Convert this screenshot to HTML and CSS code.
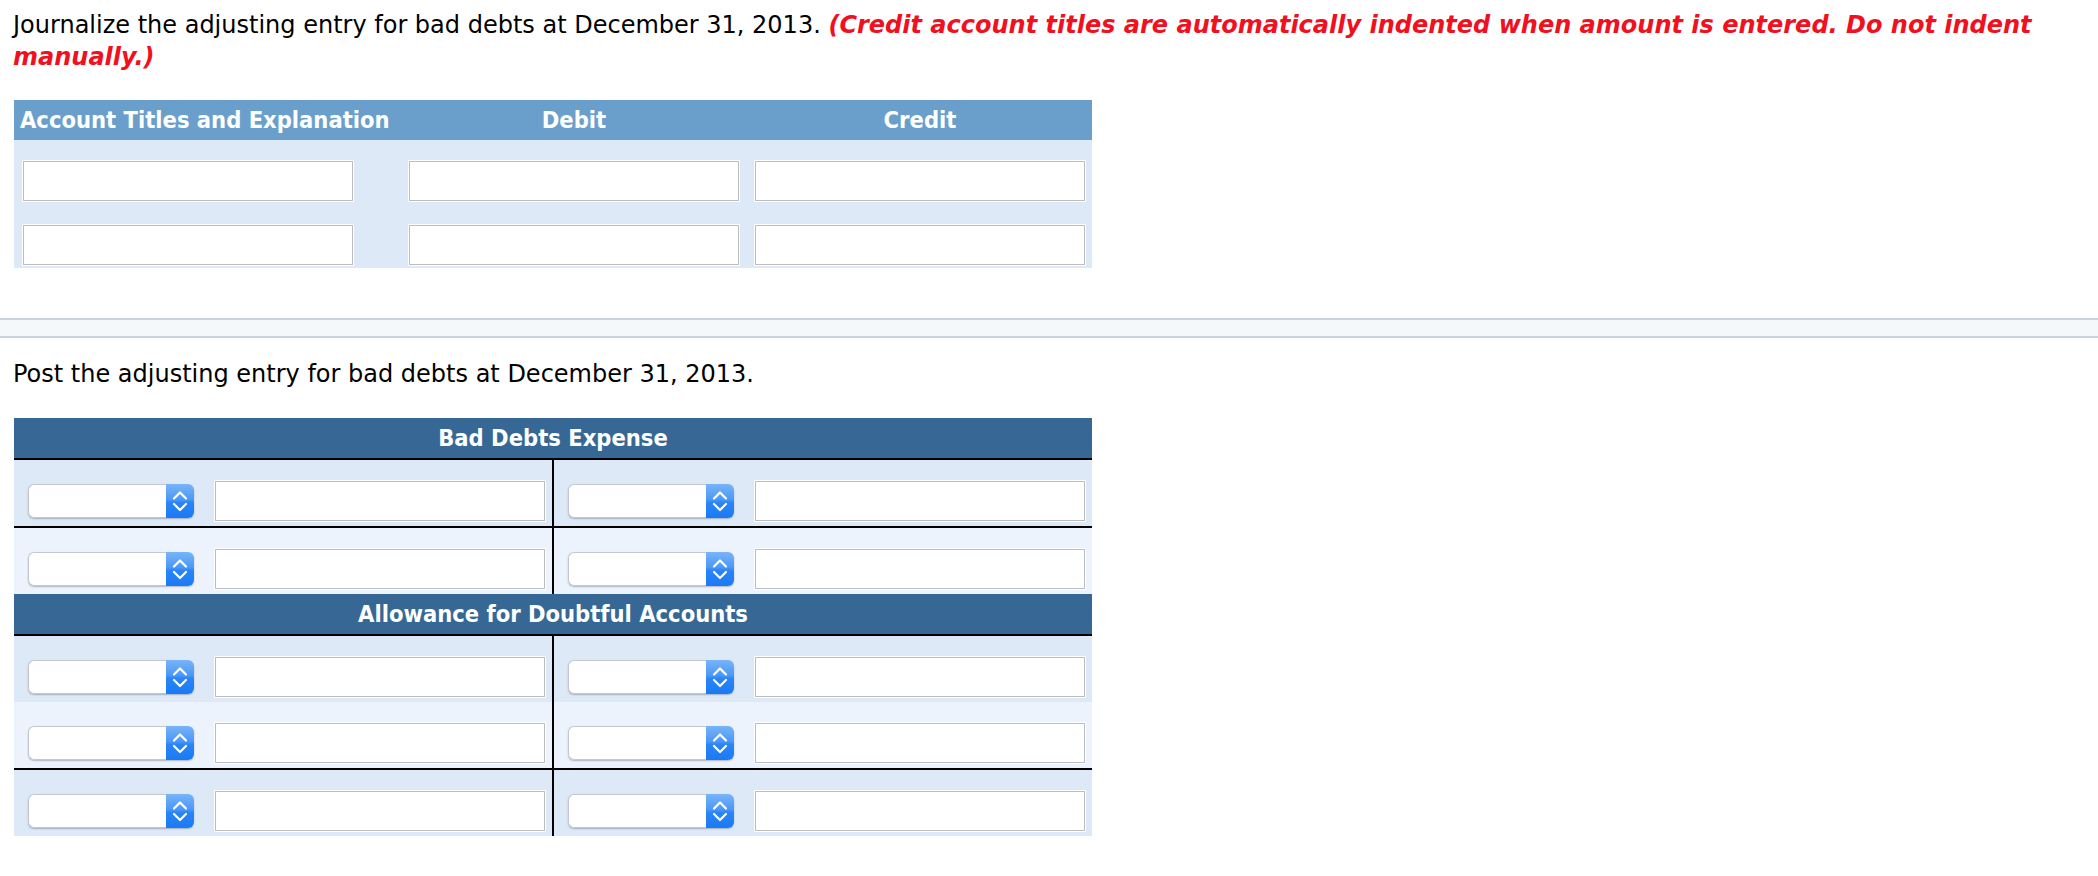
FILE: index.html
```html
<!DOCTYPE html>
<html lang="en">
<head>
<meta charset="utf-8">
<title>Bad debts adjusting entry</title>
<link rel="stylesheet" href="styles.css">
</head>
<body>
<div class="section">
  <p class="prompt first">Journalize the adjusting entry for bad debts at December 31, 2013. <span class="note">(Credit account titles are automatically indented when amount is entered. Do not indent manually.)</span></p>

  <div class="journal">
    <div class="jhead">
      <div class="jh jh-acct">Account Titles and Explanation</div>
      <div class="jh jh-num">Debit</div>
      <div class="jh jh-num">Credit</div>
    </div>
    <div class="jrow">
      <div class="jcell"><input class="field" type="text"></div>
      <div class="jcell"><input class="field" type="text"></div>
      <div class="jcell"><input class="field" type="text"></div>
    </div>
    <div class="jrow">
      <div class="jcell"><input class="field" type="text"></div>
      <div class="jcell"><input class="field" type="text"></div>
      <div class="jcell"><input class="field" type="text"></div>
    </div>
  </div>
</div>

<div class="divider"></div>

<div class="section">
  <p class="prompt second">Post the adjusting entry for bad debts at December 31, 2013.</p>

  <div class="ledger">
    <div class="lhead">Bad Debts Expense</div>
    <div class="lrow dark ruled">
      <div class="lcell left">
        <div class="select"><span class="select-field"></span><span class="select-btn"><svg viewBox="0 0 28 34" width="28" height="34"><path d="M8 14.5 L14 8.5 L20 14.5 M8 20 L14 26 L20 20" fill="none" stroke="#fff" stroke-width="2.2" stroke-linecap="round" stroke-linejoin="round"/></svg></span></div>
        <input class="field" type="text">
      </div>
      <div class="lcell">
        <div class="select"><span class="select-field"></span><span class="select-btn"><svg viewBox="0 0 28 34" width="28" height="34"><path d="M8 14.5 L14 8.5 L20 14.5 M8 20 L14 26 L20 20" fill="none" stroke="#fff" stroke-width="2.2" stroke-linecap="round" stroke-linejoin="round"/></svg></span></div>
        <input class="field" type="text">
      </div>
    </div>
    <div class="lrow light">
      <div class="lcell left">
        <div class="select"><span class="select-field"></span><span class="select-btn"><svg viewBox="0 0 28 34" width="28" height="34"><path d="M8 14.5 L14 8.5 L20 14.5 M8 20 L14 26 L20 20" fill="none" stroke="#fff" stroke-width="2.2" stroke-linecap="round" stroke-linejoin="round"/></svg></span></div>
        <input class="field" type="text">
      </div>
      <div class="lcell">
        <div class="select"><span class="select-field"></span><span class="select-btn"><svg viewBox="0 0 28 34" width="28" height="34"><path d="M8 14.5 L14 8.5 L20 14.5 M8 20 L14 26 L20 20" fill="none" stroke="#fff" stroke-width="2.2" stroke-linecap="round" stroke-linejoin="round"/></svg></span></div>
        <input class="field" type="text">
      </div>
    </div>

    <div class="lhead">Allowance for Doubtful Accounts</div>
    <div class="lrow dark">
      <div class="lcell left">
        <div class="select"><span class="select-field"></span><span class="select-btn"><svg viewBox="0 0 28 34" width="28" height="34"><path d="M8 14.5 L14 8.5 L20 14.5 M8 20 L14 26 L20 20" fill="none" stroke="#fff" stroke-width="2.2" stroke-linecap="round" stroke-linejoin="round"/></svg></span></div>
        <input class="field" type="text">
      </div>
      <div class="lcell">
        <div class="select"><span class="select-field"></span><span class="select-btn"><svg viewBox="0 0 28 34" width="28" height="34"><path d="M8 14.5 L14 8.5 L20 14.5 M8 20 L14 26 L20 20" fill="none" stroke="#fff" stroke-width="2.2" stroke-linecap="round" stroke-linejoin="round"/></svg></span></div>
        <input class="field" type="text">
      </div>
    </div>
    <div class="lrow light ruled">
      <div class="lcell left">
        <div class="select"><span class="select-field"></span><span class="select-btn"><svg viewBox="0 0 28 34" width="28" height="34"><path d="M8 14.5 L14 8.5 L20 14.5 M8 20 L14 26 L20 20" fill="none" stroke="#fff" stroke-width="2.2" stroke-linecap="round" stroke-linejoin="round"/></svg></span></div>
        <input class="field" type="text">
      </div>
      <div class="lcell">
        <div class="select"><span class="select-field"></span><span class="select-btn"><svg viewBox="0 0 28 34" width="28" height="34"><path d="M8 14.5 L14 8.5 L20 14.5 M8 20 L14 26 L20 20" fill="none" stroke="#fff" stroke-width="2.2" stroke-linecap="round" stroke-linejoin="round"/></svg></span></div>
        <input class="field" type="text">
      </div>
    </div>
    <div class="lrow dark">
      <div class="lcell left">
        <div class="select"><span class="select-field"></span><span class="select-btn"><svg viewBox="0 0 28 34" width="28" height="34"><path d="M8 14.5 L14 8.5 L20 14.5 M8 20 L14 26 L20 20" fill="none" stroke="#fff" stroke-width="2.2" stroke-linecap="round" stroke-linejoin="round"/></svg></span></div>
        <input class="field" type="text">
      </div>
      <div class="lcell">
        <div class="select"><span class="select-field"></span><span class="select-btn"><svg viewBox="0 0 28 34" width="28" height="34"><path d="M8 14.5 L14 8.5 L20 14.5 M8 20 L14 26 L20 20" fill="none" stroke="#fff" stroke-width="2.2" stroke-linecap="round" stroke-linejoin="round"/></svg></span></div>
        <input class="field" type="text">
      </div>
    </div>
  </div>
</div>
</body>
</html>
```

FILE: styles.css
```css
html, body {
  margin: 0;
  padding: 0;
  background: #ffffff;
}

body {
  font-family: "DejaVu Sans", Verdana, sans-serif;
  font-size: 24px;
  color: #000000;
}

.section {
  padding: 0 13px;
}

.prompt {
  margin: 0;
  line-height: 30px;
}

.prompt.first {
  padding-top: 9px;
  line-height: 32px;
}

.prompt.second {
  margin-top: 21px;
}

.note {
  color: #f0101e;
  font-weight: bold;
  font-style: italic;
}

/* journal entry table */
.journal {
  width: 1078px;
  margin: 27px 0 0 1px;
  background: #dde9f6;
}

.jhead {
  display: grid;
  grid-template-columns: 386px 346px 346px;
  height: 40px;
  background: #6b9fcb;
  color: #ffffff;
  font-family: "DejaVu Sans Condensed", "DejaVu Sans", sans-serif;
  font-stretch: condensed;
  font-weight: bold;
  font-size: 23.5px;
}

.jh {
  display: flex;
  align-items: center;
  white-space: nowrap;
}

.jh-acct {
  padding-left: 6px;
}

.jh-num {
  justify-content: center;
  padding: 0 7px 0 9px;
}

.jrow {
  display: grid;
  grid-template-columns: 386px 346px 346px;
  height: 64px;
  box-sizing: border-box;
}

.jcell {
  padding: 21px 0 3px 9px;
}

.field {
  display: block;
  box-sizing: border-box;
  width: 330px;
  height: 40px;
  margin: 0;
  padding: 0 4px;
  border: 1px solid #bdbdbd;
  border-radius: 0;
  background: #ffffff;
  box-shadow: 0 0 0 1px #ffffff;
  font: inherit;
  outline: none;
}

/* divider band */
.divider {
  margin-top: 50px;
  height: 16px;
  border-top: 2px solid #cad2dd;
  border-bottom: 2px solid #cad2dd;
  background: #f5f8fb;
}

/* T-account ledger */
.ledger {
  width: 1078px;
  margin: 29px 0 0 1px;
}

.lhead {
  height: 40px;
  background: #376895;
  color: #ffffff;
  border-bottom: 2px solid #000000;
  display: flex;
  align-items: center;
  justify-content: center;
  font-family: "DejaVu Sans Condensed", "DejaVu Sans", sans-serif;
  font-stretch: condensed;
  font-weight: bold;
  font-size: 23.5px;
  white-space: nowrap;
}

.lrow {
  display: grid;
  grid-template-columns: 540px 538px;
  height: 66px;
}

.lrow.dark {
  background: #dde9f6;
}

.lrow.light {
  background: #ecf3fc;
}

.lrow.ruled {
  border-bottom: 2px solid #000000;
}

.lcell {
  box-sizing: border-box;
  display: flex;
  align-items: center;
  gap: 21px;
  padding: 21px 7px 5px 14px;
}

.lcell.left {
  border-right: 2px solid #000000;
}

.select {
  display: flex;
  width: 166px;
  height: 34px;
  flex: none;
  border-radius: 6px;
  box-shadow: 0 1px 1.5px rgba(60, 70, 90, 0.35);
}

.select-field {
  flex: 1;
  background: #ffffff;
  border: 1px solid #c3c7ce;
  border-right: none;
  border-radius: 6px 0 0 6px;
}

.select-btn {
  width: 28px;
  height: 34px;
  border-radius: 0 6px 6px 0;
  background: linear-gradient(to bottom, #78b4f8 0%, #4b98f7 45%, #2a84f6 55%, #1a7af5 100%);
  display: flex;
}

.select-btn svg {
  display: block;
}
```
